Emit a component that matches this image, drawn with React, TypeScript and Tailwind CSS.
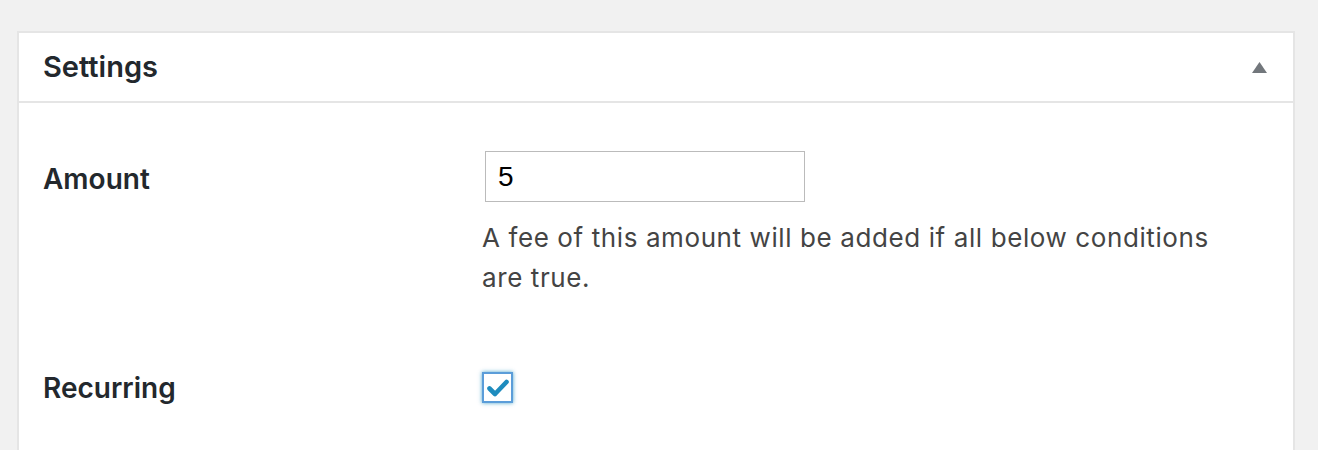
import { useState } from "react";

const sans = "font-['Inter','Noto_Sans',sans-serif]";

function Toggle() {
  return (
    <svg width="15" height="11" viewBox="0 0 15 11" className="block">
      <polygon points="7.5,0 15,11 0,11" fill="#72777c" />
    </svg>
  );
}

function Checkbox({ checked, onChange }: { checked: boolean; onChange: () => void }) {
  return (
    <button
      type="button"
      onClick={onChange}
      className="flex h-[31px] w-[31px] items-center justify-center border-2 border-[#5b9dd9] bg-white shadow-[0_0_4px_rgba(30,140,190,0.8)]"
    >
      {checked && (
        <svg width="22" height="18" viewBox="0 0 22 18">
          <path d="M2.5 9.5 L8 15 L19.5 3" fill="none" stroke="#1e8cbe" strokeWidth="4.6" strokeLinecap="round" strokeLinejoin="round" />
        </svg>
      )}
    </button>
  );
}

export default function App() {
  const [amount, setAmount] = useState("5");
  const [recurring, setRecurring] = useState(true);

  return (
    <div className={`min-h-[450px] bg-[#f1f1f1] pl-[17px] pr-[23px] pt-[31px] ${sans}`}>
      <div className="border-2 border-[#e5e5e5] bg-white">
        <div className="flex h-[70px] items-center justify-between border-b-2 border-[#e5e5e5] pl-[24px] pr-[26px]">
          <h2 className="text-[29px] font-semibold leading-[36px] text-[#23282d]">Settings</h2>
          <Toggle />
        </div>

        <div className="px-[23px] pb-[60px]">
          <div className="flex pt-[48px]">
            <div className="w-[440px] shrink-0 pl-[1px] pt-[10px] text-[28px] font-semibold leading-[36px] text-[#23282d]">
              Amount
            </div>
            <div className="flex-1">
              <input
                value={amount}
                onChange={(e) => setAmount(e.target.value)}
                className="ml-[3px] block h-[51px] w-[320px] border border-[#bbbbbb] px-[12px] font-['Liberation_Sans',Arial,sans-serif] text-[28px] text-black outline-none"
              />
              <p className="mt-[16px] max-w-[745px] text-[26px] leading-[40px] tracking-[0.6px] text-[#444]">
                A fee of this amount will be added if all below conditions are true.
              </p>
            </div>
          </div>

          <div className="flex pt-[72px]">
            <div className="w-[440px] shrink-0 pl-[1px] text-[28px] font-semibold leading-[36px] text-[#23282d]">
              Recurring
            </div>
            <div className="flex-1 pt-[2px]">
              <Checkbox checked={recurring} onChange={() => setRecurring(!recurring)} />
            </div>
          </div>
        </div>
      </div>
    </div>
  );
}
